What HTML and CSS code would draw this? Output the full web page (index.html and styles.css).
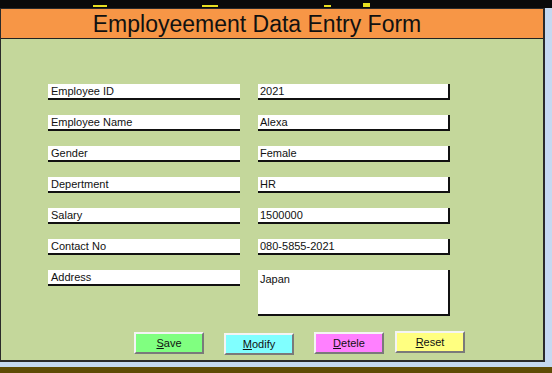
FILE: index.html
```html
<!DOCTYPE html>
<html>
<head>
<meta charset="utf-8">
<link rel="stylesheet" href="styles.css">
</head>
<body>
<div class="screen">
  <div class="topbar">
    <span class="mark m1"></span>
    <span class="mark m2"></span>
    <span class="mark m3"></span>
    <span class="mark m4"></span>
  </div>
  <div class="middle">
    <div class="frame">
      <div class="header">Employeement Data Entry Form</div>
      <div class="body">
        <div class="form">
          <div class="row"><div class="label">Employee ID</div><div class="value">2021</div></div>
          <div class="row"><div class="label">Employee Name</div><div class="value">Alexa</div></div>
          <div class="row"><div class="label">Gender</div><div class="value">Female</div></div>
          <div class="row"><div class="label">Depertment</div><div class="value">HR</div></div>
          <div class="row"><div class="label">Salary</div><div class="value">1500000</div></div>
          <div class="row"><div class="label">Contact No</div><div class="value">080-5855-2021</div></div>
          <div class="row"><div class="label">Address</div><div class="value tall">Japan</div></div>
        </div>
        <div class="buttons">
          <div class="btn save"><u>S</u>ave</div>
          <div class="btn modify"><u>M</u>odify</div>
          <div class="btn delete"><u>D</u>etele</div>
          <div class="btn reset"><u>R</u>eset</div>
        </div>
      </div>
    </div>
    <div class="rightstrip"></div>
  </div>
  <div class="bottomblue"></div>
  <div class="bottombar"></div>
</div>
</body>
</html>
```
FILE: styles.css
```css
html, body {
  margin: 0;
  padding: 0;
  background: #c5d9f1;
}
.screen {
  width: 552px;
  height: 373px;
  display: flex;
  flex-direction: column;
  overflow: hidden;
  font-family: "Liberation Sans", Arial, sans-serif;
  color: #111;
}
.topbar {
  height: 8px;
  flex: 0 0 8px;
  background: #0a0a0a;
  display: flex;
  align-items: flex-end;
}
.mark {
  display: block;
  background: #e8e020;
  height: 2px;
  margin-bottom: 1px;
}
.m1 { margin-left: 93px; width: 14px; }
.m2 { margin-left: 95px; width: 16px; }
.m3 { margin-left: 106px; width: 7px; }
.m4 { margin-left: 32px; width: 7px; height: 4px; }
.middle {
  display: flex;
  flex: 0 0 354px;
  height: 354px;
}
.frame {
  width: 545px;
  flex: 0 0 545px;
  box-sizing: border-box;
  border: 1px solid #2a2a2a;
  border-right-width: 2px;
  border-bottom-width: 2px;
  display: flex;
  flex-direction: column;
}
.header {
  height: 29px;
  flex: 0 0 29px;
  background: #f79646;
  border-bottom: 1px solid #222;
  text-align: center;
  font-size: 23px;
  line-height: 30px;
  color: #111;
  padding-right: 30px;
}
.body {
  flex: 1;
  background: #c4d79b;
  padding: 45px 0 0 47px;
}
.form {
  display: flex;
  flex-direction: column;
  gap: 15px;
}
.row {
  display: flex;
  gap: 18px;
}
.label, .value {
  width: 192px;
  height: 16px;
  box-sizing: border-box;
  background: #fff;
  font-size: 11px;
  line-height: 15px;
  padding-left: 3px;
  border-bottom: 2px solid #111;
}
.value {
  border-right: 2px solid #111;
  padding-left: 2px;
}
.value.tall {
  height: 46px;
  padding-top: 2px;
}
.buttons {
  display: flex;
  align-items: flex-start;
  margin-top: 15px;
  padding-left: 86px;
}
.btn {
  width: 70px;
  height: 22px;
  box-sizing: border-box;
  border-top: 2px solid #f4f4f4;
  border-left: 2px solid #f4f4f4;
  border-right: 2px solid #7a7a7a;
  border-bottom: 2px solid #7a7a7a;
  font-size: 11px;
  line-height: 18px;
  text-align: center;
  color: #111;
}
.save { background: #80ff80; margin-top: 1px; }
.modify { background: #80ffff; margin-left: 20px; margin-top: 2px; }
.delete { background: #ff80ff; margin-left: 20px; margin-top: 1px; }
.reset { background: #ffff80; margin-left: 11px; }
.rightstrip {
  flex: 1;
  background: #c5d9f1;
}
.bottomblue {
  flex: 0 0 5px;
  background: #c5d9f1;
}
.bottombar {
  flex: 1;
  background: #5e4c05;
}
```
